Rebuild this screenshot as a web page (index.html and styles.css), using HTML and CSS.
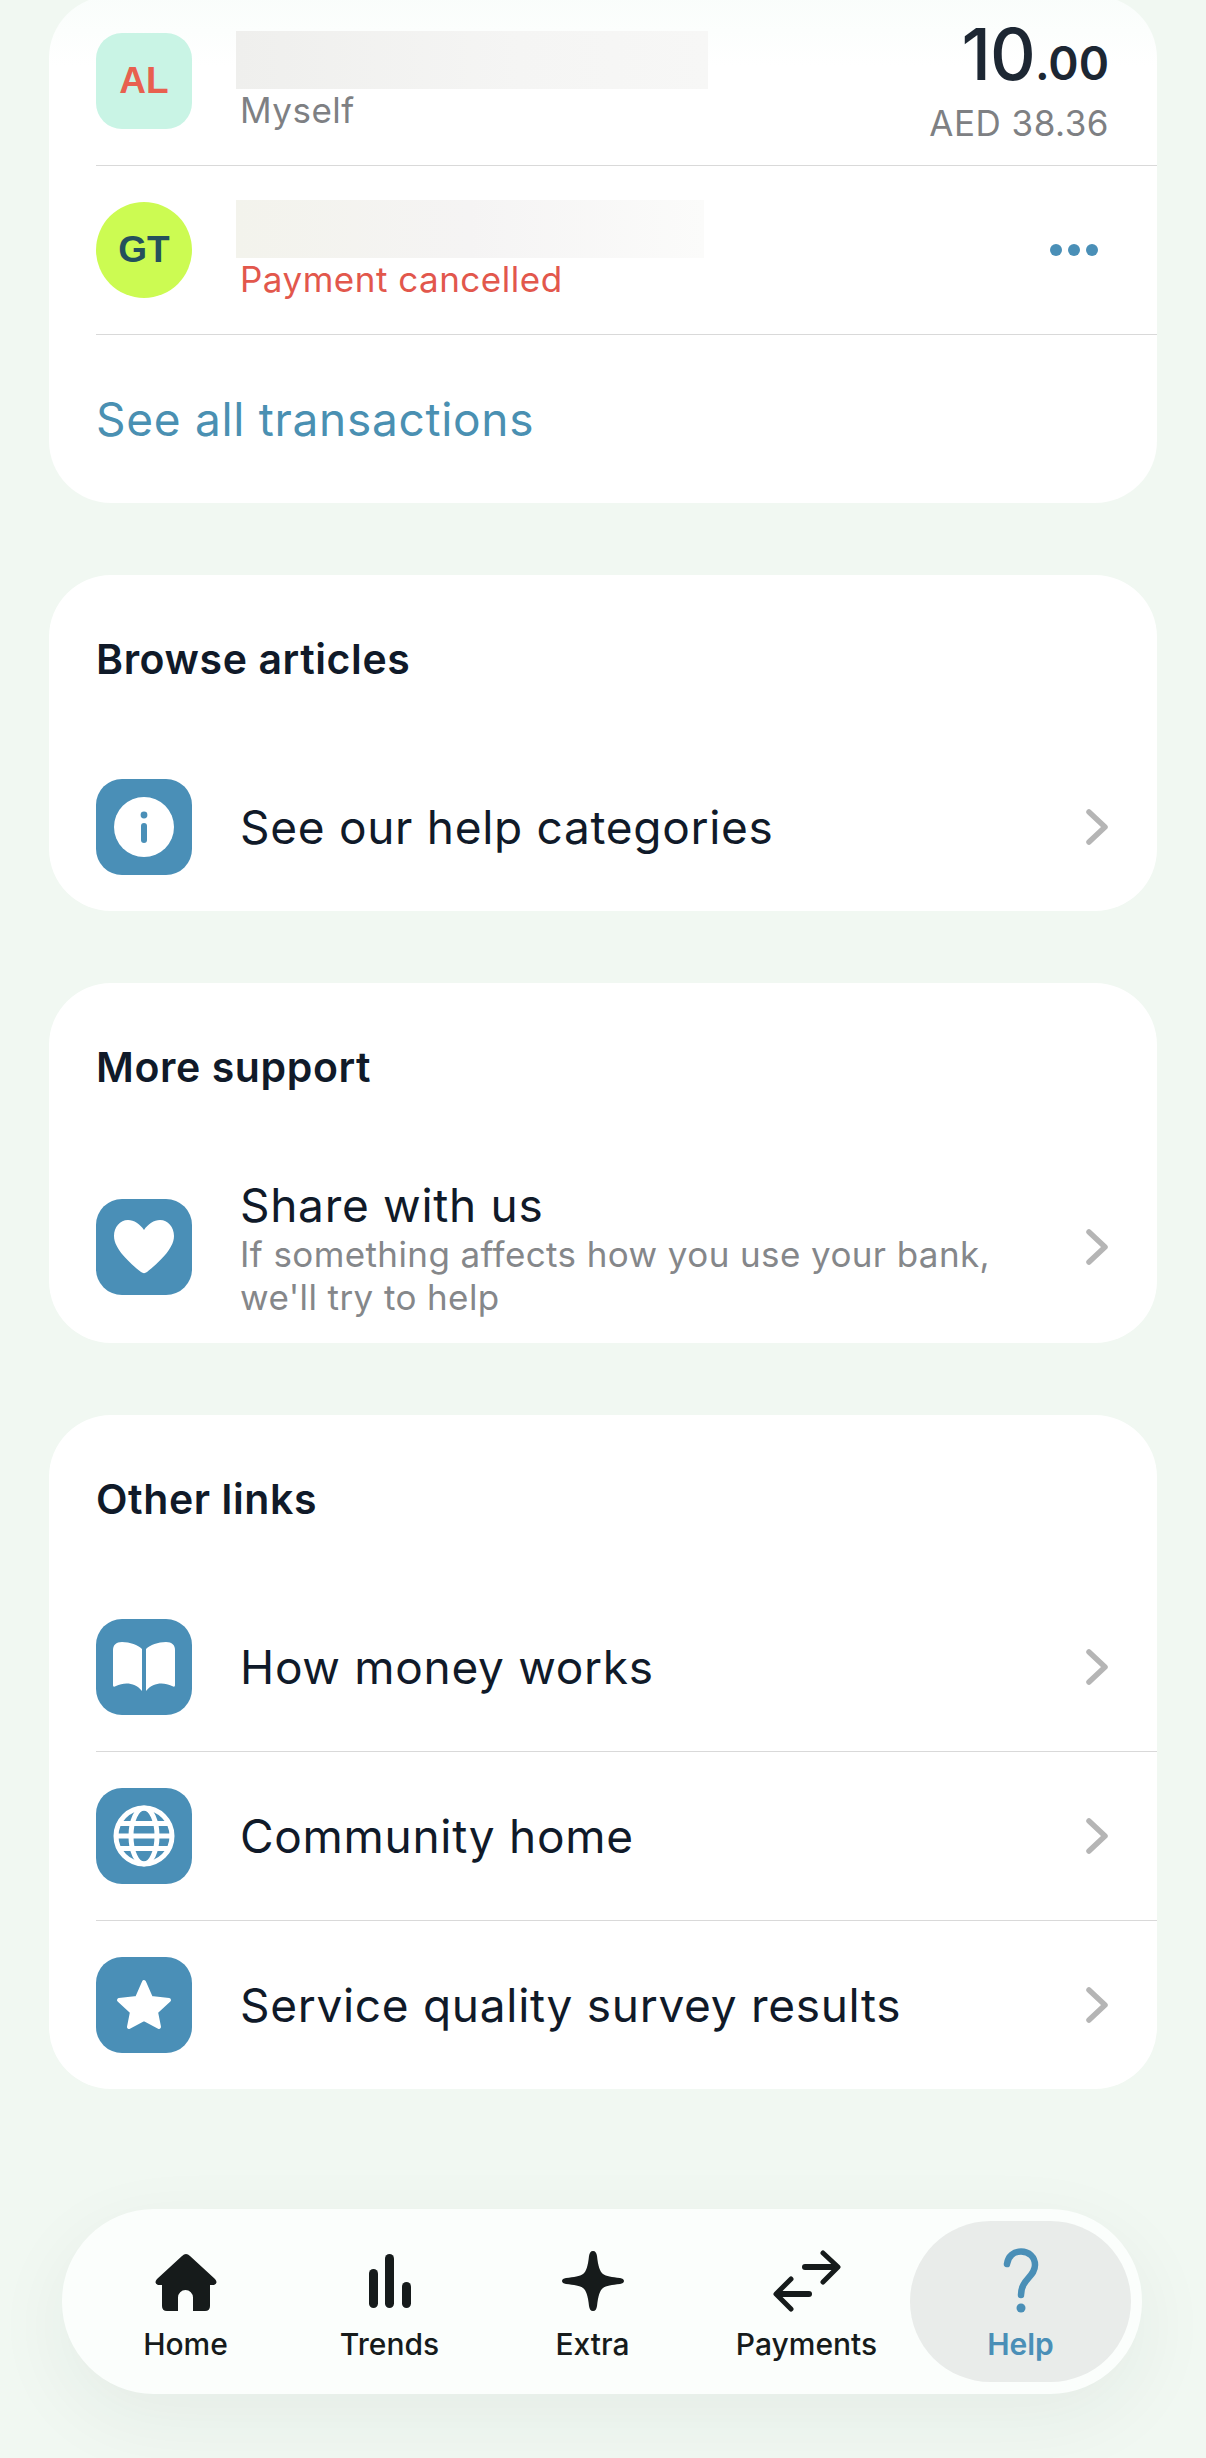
FILE: index.html
```html
<!DOCTYPE html>
<html lang="en">
<head>
<meta charset="utf-8">
<title>Help</title>
<link rel="stylesheet" href="styles.css">
</head>
<body>
<main class="page">
  <section class="card card-top">
    <div class="row row-first">
      <div class="tile tile-al">AL</div>
      <div class="col">
        <div class="redact redact-a"></div>
        <div class="meta">Myself</div>
      </div>
      <div class="amount">
        <div class="amount-main">10<span class="amount-minor">.00</span></div>
        <div class="amount-fx">AED 38.36</div>
      </div>
    </div>
    <div class="row">
      <div class="tile tile-gt">GT</div>
      <div class="col">
        <div class="redact redact-b"></div>
        <div class="meta meta-red">Payment cancelled</div>
      </div>
      <svg class="dots" width="48" height="14" viewBox="0 0 48 14"><circle cx="6" cy="7" r="6" /><circle cx="24" cy="7" r="6" /><circle cx="42" cy="7" r="6" /></svg>
    </div>
    <a class="see-all">See all transactions</a>
  </section>

  <section class="card">
    <h2 class="card-title">Browse articles</h2>
    <div class="row row-last">
      <div class="tile tile-blue">
        <svg width="96" height="96" viewBox="0 0 96 96"><circle cx="48" cy="48" r="30" fill="#fff"/><circle cx="48" cy="36" r="3.4" fill="#4a8fb7"/><rect x="45" y="44" width="6" height="20" rx="3" fill="#4a8fb7"/></svg>
      </div>
      <div class="label">See our help categories</div>
      <svg class="chev" width="24" height="36" viewBox="0 0 24 36"><path d="M4 3 L20 18 L4 33"/></svg>
    </div>
  </section>

  <section class="card">
    <h2 class="card-title">More support</h2>
    <div class="row row-last row-tall">
      <div class="tile tile-blue">
        <svg width="96" height="96" viewBox="0 0 96 96"><path fill="#fff" d="M48 31C44 25 38 21 32 21C24 21 18 28 18 37C18 50 34 64 45 73C47 74.5 49 74.5 51 73C62 64 78 50 78 37C78 28 72 21 64 21C58 21 52 25 48 31Z"/></svg>
      </div>
      <div class="col col-text">
        <div class="label">Share with us</div>
        <div class="desc">If something affects how you use your bank,<br>we'll try to help</div>
      </div>
      <svg class="chev" width="24" height="36" viewBox="0 0 24 36"><path d="M4 3 L20 18 L4 33"/></svg>
    </div>
  </section>

  <section class="card">
    <h2 class="card-title">Other links</h2>
    <div class="row">
      <div class="tile tile-blue">
        <svg width="96" height="96" viewBox="0 0 96 96"><path fill="#fff" d="M46 30C42 26 34 23 26 23C20 23 17 26 17 31V66C17 68 18 68 20 67C28 63 39 63 46 72Z"/><path fill="#fff" d="M50 30C54 26 62 23 70 23C76 23 79 26 79 31V66C79 68 78 68 76 67C68 63 57 63 50 72Z"/></svg>
      </div>
      <div class="label">How money works</div>
      <svg class="chev" width="24" height="36" viewBox="0 0 24 36"><path d="M4 3 L20 18 L4 33"/></svg>
    </div>
    <div class="row">
      <div class="tile tile-blue">
        <svg width="96" height="96" viewBox="0 0 96 96" fill="none" stroke="#fff" stroke-width="5"><circle cx="48" cy="48" r="28"/><ellipse cx="48" cy="48" rx="13" ry="28"/><path d="M20 48H76M23 35.5H73M23 60.5H73"/></svg>
      </div>
      <div class="label">Community home</div>
      <svg class="chev" width="24" height="36" viewBox="0 0 24 36"><path d="M4 3 L20 18 L4 33"/></svg>
    </div>
    <div class="row row-last">
      <div class="tile tile-blue">
        <svg width="96" height="96" viewBox="0 0 96 96"><path fill="#fff" stroke="#fff" stroke-width="4" stroke-linejoin="round" d="M48 25L55 41L73 43L60 55L63 70L48 62L33 70L36 55L23 43L41 41Z"/></svg>
      </div>
      <div class="label">Service quality survey results</div>
      <svg class="chev" width="24" height="36" viewBox="0 0 24 36"><path d="M4 3 L20 18 L4 33"/></svg>
    </div>
  </section>
</main>

<nav class="tabbar">
  <div class="tab tab-home">
    <svg width="62" height="66" viewBox="0 0 62 66"><path fill="#161b1b" fill-rule="evenodd" d="M27 8Q31 4 35 8L60 31Q63.5 35.5 59 37H55V58Q55 63 50 63H38V49.5A7.5 7.5 0 0 0 23 49.5V63H12Q7 63 7 58V37H3Q-1.5 35.5 2 31Z"/></svg>
    <span class="tab-label">Home</span>
  </div>
  <div class="tab tab-trends">
    <svg width="42" height="66" viewBox="0 0 42 66" fill="#161b1b"><rect x="0" y="21" width="9" height="39" rx="4.5"/><rect x="16" y="6" width="9" height="54" rx="4.5"/><rect x="33" y="34" width="9" height="26" rx="4.5"/></svg>
    <span class="tab-label">Trends</span>
  </div>
  <div class="tab tab-extra">
    <svg width="62" height="66" viewBox="0 0 62 66"><path fill="#161b1b" d="M31 3C33.500 3 34.500 5 35 8C36 18 38 24 41 26C44 28.500 50 29 58 30C60.500 30.300 62 31.500 62 33C62 34.500 60.500 35.700 58 36C50 37 44 37.500 41 40C38 42 36 48 35 58C34.500 61 33.500 63 31 63C28.500 63 27.500 61 27 58C26 48 24 42 21 40C18 37.500 12 37 4 36C1.500 35.700 0 34.500 0 33C0 31.500 1.500 30.300 4 30C12 29 18 28.500 21 26C24 24 26 18 27 8C27.500 5 28.500 3 31 3Z"/></svg>
    <span class="tab-label">Extra</span>
  </div>
  <div class="tab tab-pay">
    <svg width="68" height="66" viewBox="0 0 68 66" fill="none" stroke="#161b1b" stroke-linecap="round" stroke-linejoin="round"><path stroke-width="6" d="M32 19H62"/><path stroke-width="5" d="M50 5L65 19L50 34"/><path stroke-width="6" d="M36 46H6"/><path stroke-width="5" d="M18 31L3 46L18 61"/></svg>
    <span class="tab-label">Payments</span>
  </div>
  <div class="tab tab-help">
    <svg width="42" height="66" viewBox="0 0 42 66" fill="none" stroke="#4a8fb7" stroke-width="6.500" stroke-linecap="round"><path d="M7 16C8 8 14 3.500 21 3.500C29 3.500 35 9 35 17C35 29 21 31 21 47"/><circle cx="21" cy="60" r="4.500" fill="#4a8fb7" stroke="none"/></svg>
    <span class="tab-label tab-label-active">Help</span>
  </div>
</nav>
</body>
</html>
```

FILE: styles.css
```css
* { box-sizing: border-box; }
html, body { margin: 0; padding: 0; }
body {
  position: relative;
  width: 1206px;
  height: 2458px;
  overflow: hidden;
  background: #f1f8f2;
  font-family: Inter, "Noto Sans", sans-serif;
  color: #101a29;
}
.page {
  display: flex;
  flex-direction: column;
  gap: 72px;
  padding: 0 49px;
  margin-top: -4px;
}
.card {
  background: #fff;
  border-radius: 62px;
  padding-left: 47px;
  overflow: hidden;
}
.card-top {
  height: 507px;
  background: linear-gradient(#f9fdfb, #fff 70px);
}
.card-title {
  margin: 0;
  height: 168px;
  padding-top: 54px;
  font-size: 41px;
  line-height: 60px;
  font-weight: 600;
  letter-spacing: 0.6px;
}
.row {
  display: flex;
  align-items: center;
  gap: 48px;
  height: 169px;
  padding-right: 49px;
  border-bottom: 1.5px solid #d9d9d9;
}
.row-first { height: 170px; }
.row-last { border-bottom: 0; height: 168px; }
.row-tall { height: 192px; }
.tile {
  flex: none;
  width: 96px;
  height: 96px;
  border-radius: 26px;
  display: flex;
  align-items: center;
  justify-content: center;
  font-family: "Liberation Sans", Arial, sans-serif;
  font-weight: 700;
  font-size: 37px;
}
.tile svg { display: block; }
.tile-al { background: #c9f4e5; color: #e8604f; }
.tile-gt { background: #ccfb52; color: #24505c; border-radius: 50%; }
.tile-blue { background: #4a8fb7; }
.col { flex: 1; min-width: 0; display: flex; flex-direction: column; }
.col-text { padding-top: 4px; }
.redact { margin-left: -4px; height: 58px; }
.redact-a { width: 472px; background: linear-gradient(90deg, #efefed, #f5f5f4 60%, #f7f7f6); }
.redact-b { width: 468px; background: linear-gradient(90deg, #f3f3ec, #f5f4f4 50%, #fbfbfa); }
.meta { font-size: 35px; line-height: 42px; letter-spacing: 0.5px; color: #7e8083; }
.meta-red { color: #e2574c; }
.amount { text-align: right; margin-right: -1px; }
.amount-main { font-size: 71px; line-height: 72px; font-weight: 500; letter-spacing: -1px; color: #1d2733; }
.amount-minor { font-size: 46px; letter-spacing: 0; font-weight: 600; }
.amount-fx { font-size: 35px; line-height: 42px; letter-spacing: 0.5px; color: #7e8083; margin-top: 3px; }
.dots { flex: none; margin-right: 10px; fill: #4a8fb7; }
.label { flex: 1; font-size: 46px; line-height: 50px; letter-spacing: 0.7px; color: #101a29; }
.col-text .label { flex: none; }
.desc { font-size: 35px; line-height: 43px; letter-spacing: 0.4px; color: #85878a; margin-top: 3px; }
.chev { flex: none; margin-right: -1px; fill: none; stroke: #b5b5b5; stroke-width: 5.5; stroke-linecap: round; stroke-linejoin: round; }
.see-all {
  display: flex;
  align-items: center;
  height: 168px;
  font-size: 46px;
  letter-spacing: 0.7px;
  color: #4a90b2;
}
.tabbar {
  position: absolute;
  left: 62px;
  top: 2209px;
  width: 1080px;
  height: 185px;
  display: flex;
  padding: 12px 11px 12px 20px;
  background: #fbfefc;
  border-radius: 92px;
  box-shadow: 0 24px 80px rgba(40, 50, 50, 0.06);
}
.tab {
  display: flex;
  flex-direction: column;
  align-items: center;
  padding-top: 27px;
}
.tab svg { display: block; }
.tab-home, .tab-trends { width: 205px; }
.tab-home { padding-left: 2px; }
.tab-extra { width: 201px; }
.tab-pay { width: 217px; padding-left: 10px; }
.tab-help { width: 221px; background: #e9ecea; border-radius: 84px; }
.tab-label {
  margin-top: 12px;
  font-size: 30px;
  line-height: 36px;
  font-weight: 500;
  color: #161b1b;
}
.tab-label-active { color: #4a8fb7; font-weight: 600; }
```
